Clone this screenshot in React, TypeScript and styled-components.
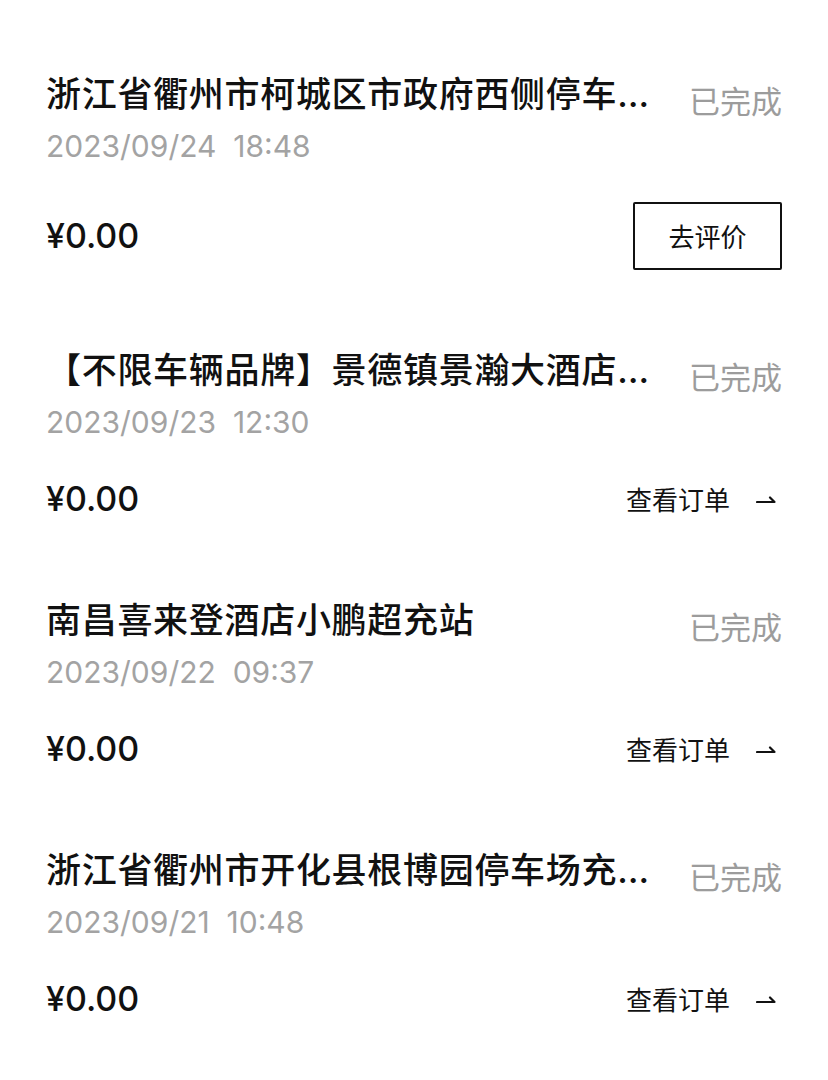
import styled, { createGlobalStyle } from 'styled-components'

const GlobalStyle = createGlobalStyle`
  body {
    margin: 0;
    background: #fff;
    font-family: "Inter", "Noto Sans CJK SC", sans-serif;
    color: #111;
  }
`

const cjk = `"Noto Sans CJK SC", "Inter", sans-serif`

const Page = styled.div`
  padding: 74px 46px 40px;
  display: flex;
  flex-direction: column;
  gap: 80px;
`

const Card = styled.div`
  display: flex;
  flex-direction: column;
`

const Header = styled.div`
  display: flex;
  align-items: flex-start;
  gap: 30px;
  height: 48px;
`

const Title = styled.div`
  flex: 1;
  min-width: 0;
  font-size: 35px;
  line-height: 40px;
  font-weight: 500;
  letter-spacing: 0.7px;
  white-space: nowrap;
  overflow: hidden;
  text-overflow: ellipsis;
  color: #111;
`

const Status = styled.div`
  flex-shrink: 0;
  margin-top: 4px;
  font-family: ${cjk};
  font-size: 31px;
  line-height: 44px;
  color: #9c9c9c;
`

const DateLine = styled.div`
  font-size: 30px;
  line-height: 48px;
  height: 48px;
  color: #a3a3a3;
  white-space: pre;
`

const Footer = styled.div`
  margin-top: 32px;
  display: flex;
  align-items: center;
  justify-content: space-between;
  min-height: 42px;
`

const Price = styled.div`
  font-size: 34px;
  line-height: 42px;
  height: 42px;
  font-weight: 500;
  color: #111;
`

const RateButton = styled.button`
  width: 149px;
  height: 68px;
  border: 2px solid #111;
  border-radius: 2px;
  background: #fff;
  font-family: ${cjk};
  font-size: 26px;
  line-height: 1;
  color: #111;
  padding: 0;
  cursor: pointer;
`

const OrderLink = styled.a`
  display: flex;
  align-items: center;
  gap: 26px;
  height: 42px;
  font-family: ${cjk};
  font-size: 26px;
  line-height: 42px;
  color: #111;
  text-decoration: none;
  padding-right: 6px;
`

type Order = {
  title: string
  date: string
  price: string
  rate?: boolean
}

const orders: Order[] = [
  { title: '浙江省衢州市柯城区市政府西侧停车场充电站', date: '2023/09/24  18:48', price: '¥0.00', rate: true },
  { title: '【不限车辆品牌】景德镇景瀚大酒店充电站', date: '2023/09/23  12:30', price: '¥0.00' },
  { title: '南昌喜来登酒店小鹏超充站', date: '2023/09/22  09:37', price: '¥0.00' },
  { title: '浙江省衢州市开化县根博园停车场充电站', date: '2023/09/21  10:48', price: '¥0.00' },
]

function Arrow() {
  return (
    <svg width="20" height="12" viewBox="0 0 20 12" fill="none">
      <path d="M1 9H18.5L14 4.5" stroke="#111" strokeWidth="2.2" strokeLinecap="round" strokeLinejoin="round" />
    </svg>
  )
}

export default function App() {
  return (
    <>
      <GlobalStyle />
      <Page>
        {orders.map((o) => (
          <Card key={o.date}>
            <Header>
              <Title>{o.title}</Title>
              <Status>已完成</Status>
            </Header>
            <DateLine>{o.date}</DateLine>
            <Footer>
              <Price>{o.price}</Price>
              {o.rate ? (
                <RateButton>去评价</RateButton>
              ) : (
                <OrderLink href="#">
                  查看订单
                  <Arrow />
                </OrderLink>
              )}
            </Footer>
          </Card>
        ))}
      </Page>
    </>
  )
}
